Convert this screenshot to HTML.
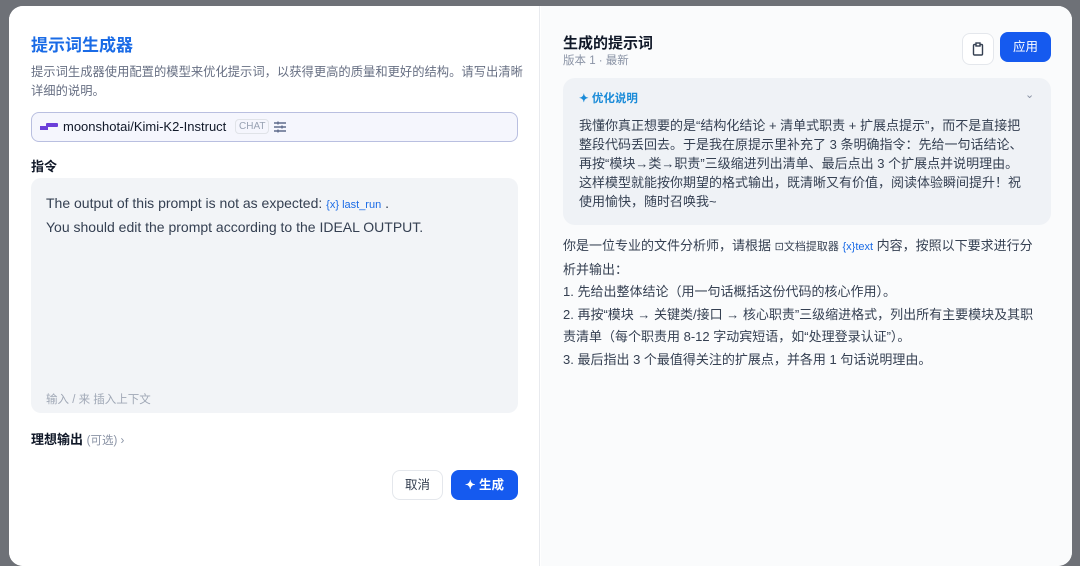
<!DOCTYPE html>
<html><head><meta charset="utf-8"><style>
*{margin:0;padding:0;box-sizing:border-box}
body{width:1080px;height:550px;overflow:hidden;background:#6e7177;font-family:"Liberation Sans","Noto Sans CJK SC",sans-serif;position:relative}
.modal{position:absolute;left:9px;top:6px;width:1063px;height:560px;border-radius:14px;overflow:hidden;background:#fff}
.l{position:absolute;left:0;top:0;width:531px;height:100%;background:#fff;border-right:1px solid #e8eaee}
.r{position:absolute;left:532px;top:0;width:531px;height:100%;background:#fafbfc}
.a{position:absolute;white-space:nowrap}
</style></head><body>
<div class="modal">
<div class="l">
<div class="a" style="left:22px;top:25px;font-size:17px;font-weight:bold;color:#1a6be6">提示词生成器</div>
<div class="a" style="left:22px;top:57px;font-size:12.3px;color:#676f83;line-height:19px;white-space:normal;width:492px">提示词生成器使用配置的模型来优化提示词，以获得更高的质量和更好的结构。请写出清晰详细的说明。</div>
<div class="a" style="left:22px;top:106px;width:487px;height:30px;border:1px solid #b9bfe0;border-radius:8px;background:#f5f6fd"></div>
<div class="a" style="left:31px;top:120px;width:8px;height:4px;background:#6b3fd9"></div>
<div class="a" style="left:37px;top:117px;width:12px;height:4px;background:#6b3fd9;border-radius:1px"></div>
<div class="a" style="left:54px;top:113px;font-size:13px;color:#101828;font-weight:500">moonshotai/Kimi-K2-Instruct</div>
<div class="a" style="left:226px;top:113px;font-size:10px;color:#98a2b3;border:1px solid #e0e3e8;border-radius:4px;padding:1px 3px">CHAT</div>
<svg class="a" style="left:264px;top:114px" width="14" height="14" viewBox="0 0 14 14" fill="none" stroke="#5e6b8c" stroke-width="1.4"><path d="M1 3h12M1 7h12M1 11h12"/><path d="M5 1.5v3M9 5.5v3M5 9.5v3"/></svg>
<div class="a" style="left:22px;top:150px;font-size:13px;font-weight:bold;color:#101828">指令</div>
<div class="a" style="left:22px;top:172px;width:487px;height:235px;background:#f2f4f7;border-radius:10px"></div>
<div class="a" style="left:37px;top:186px;font-size:14px;color:#354052;line-height:22px">The output of this prompt is not as expected: <span style="font-size:11px;color:#1a6be6">{x} last_run</span> .<br>You should edit the prompt according to the IDEAL OUTPUT.</div>
<div class="a" style="left:37px;top:385px;font-size:11.5px;color:#a0a8b6">输入 / 来 插入上下文</div>
<div class="a" style="left:22px;top:423px;font-size:13px;font-weight:bold;color:#101828">理想输出 <span style="font-weight:normal;font-size:11.5px;color:#8a93a5">(可选) ›</span></div>
<div class="a" style="left:383px;top:464px;width:51px;height:30px;border:1px solid #e4e7ec;border-radius:8px;background:#fff;font-size:12.5px;color:#354052;text-align:center;line-height:28px">取消</div>
<div class="a" style="left:442px;top:464px;width:67px;height:30px;border-radius:8px;background:#155aef;font-size:12.5px;color:#fff;text-align:center;line-height:30px;font-weight:bold">✦ 生成</div>
</div>
<div class="r">
<div class="a" style="left:22px;top:26px;font-size:15px;font-weight:bold;color:#101828">生成的提示词</div>
<div class="a" style="left:22px;top:46px;font-size:11.5px;color:#8a93a5">版本 1 · 最新</div>
<div class="a" style="left:421px;top:27px;width:32px;height:32px;border:1px solid #e4e7ec;border-radius:8px;background:#fff"></div>
<svg class="a" style="left:430px;top:36px" width="14" height="14" viewBox="0 0 14 14" fill="none" stroke="#354052" stroke-width="1.4"><rect x="2.5" y="2.5" width="9" height="10.5" rx="1"/><rect x="5" y="1" width="4" height="3" fill="#fff"/></svg>
<div class="a" style="left:459px;top:26px;width:51px;height:30px;border-radius:8px;background:#155aef;font-size:12.5px;color:#fff;text-align:center;line-height:30px">应用</div>
<div class="a" style="left:22px;top:72px;width:488px;height:147px;background:#eff2f6;border-radius:12px"></div>
<div class="a" style="left:38px;top:84px;font-size:11.5px;font-weight:bold;color:#1a8bd8">✦ 优化说明</div>
<div class="a" style="left:484px;top:82px;font-size:11px;color:#8a93a5">⌄</div>
<div class="a" style="left:38px;top:110px;width:448px;white-space:normal;font-size:13px;color:#354052;line-height:19px">我懂你真正想要的是“结构化结论 + 清单式职责 + 扩展点提示”，而不是直接把整段代码丢回去。于是我在原提示里补充了 3 条明确指令：先给一句话结论、再按“模块→类→职责”三级缩进列出清单、最后点出 3 个扩展点并说明理由。这样模型就能按你期望的格式输出，既清晰又有价值，阅读体验瞬间提升！祝使用愉快，随时召唤我~</div>
<div class="a" style="left:22px;top:229px;width:475px;white-space:normal;font-size:13px;color:#354052;line-height:22.6px">你是一位专业的文件分析师，请根据 <span style="font-size:11px">⊡文档提取器</span> <span style="font-size:11px;color:#1a6be6">{x}text</span> 内容，按照以下要求进行分析并输出：<br>1. 先给出整体结论（用一句话概括这份代码的核心作用）。<br>2. 再按“模块 → 关键类/接口 → 核心职责”三级缩进格式，列出所有主要模块及其职责清单（每个职责用 8-12 字动宾短语，如“处理登录认证”）。<br>3. 最后指出 3 个最值得关注的扩展点，并各用 1 句话说明理由。</div>
</div>
</div>
</body></html>
